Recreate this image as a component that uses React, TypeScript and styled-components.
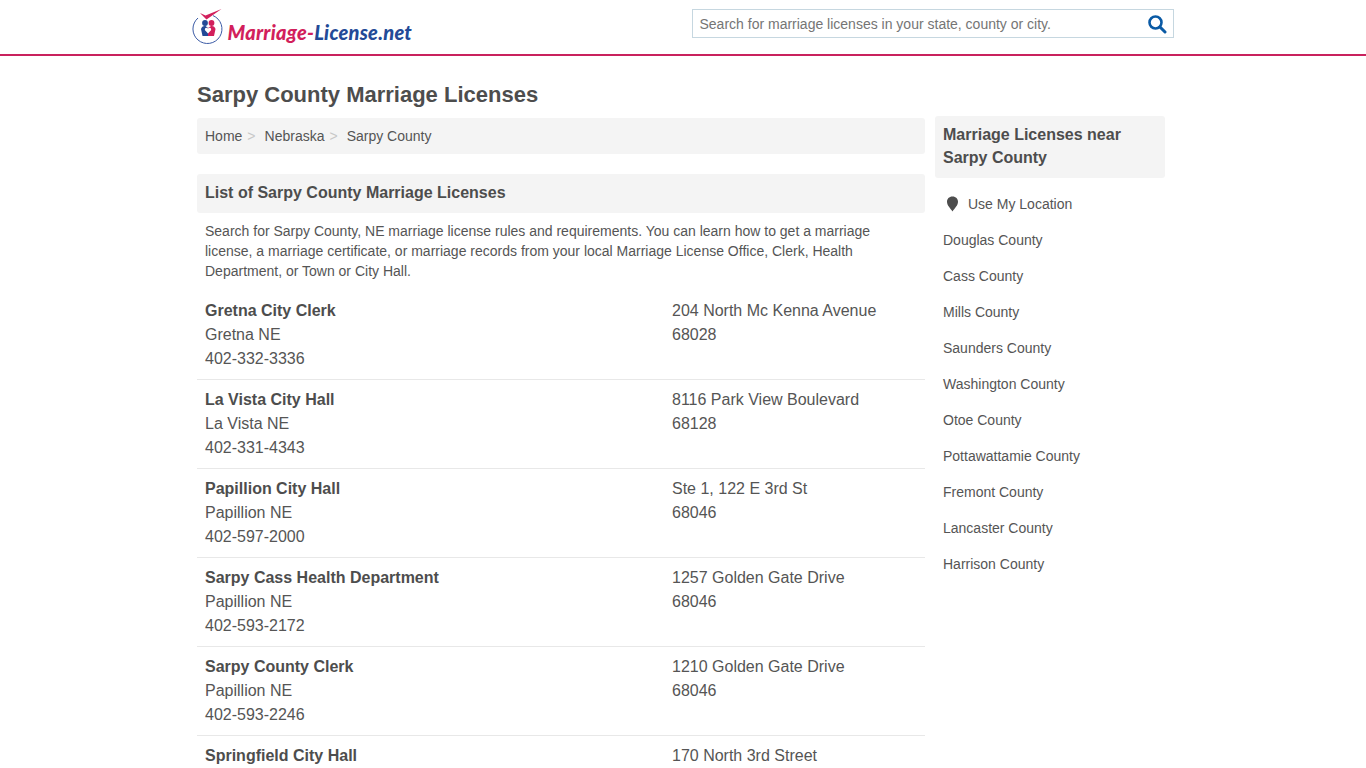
import React from "react";
import styled, { createGlobalStyle } from "styled-components";

const Global = createGlobalStyle`
  html, body { margin: 0; padding: 0; background: #fff; }
  body { font-family: "Liberation Sans", Arial, sans-serif; color: #4d4d4d; font-size: 14px; }
`;
const Header = styled.header`
  height: 54px;
  border-bottom: 2px solid #c9215d;
  display: flex;
  justify-content: center;
`;
const HeaderInner = styled.div`
  width: 982px;
  margin-left: -1px;
  display: flex;
  justify-content: space-between;
  align-items: flex-start;
`;
const Logo = styled.a`
  display: flex;
  align-items: flex-start;
  margin-top: 9px;
  gap: 4px;
  height: 37px;
`;
const LogoText = styled.span`
  font-family: "Lato", sans-serif;
  font-style: italic;
  font-weight: 900;
  font-size: 20px;
  line-height: 24px;
  margin-top: 11px;
  letter-spacing: 0.25px;
  white-space: nowrap;
`;
const LogoPink = styled.span`color: #d21f5c;`;
const LogoBlue = styled.span`color: #234a97;`;
const SearchBox = styled.div`
  box-sizing: border-box;
  width: 482px;
  height: 29px;
  margin-top: 9px;
  border: 1px solid #c6d7e0;
  display: flex;
  align-items: center;
  justify-content: space-between;
  padding: 0 6px 0 7px;
`;
const Placeholder = styled.span`
  font-size: 14px;
  color: #757575;
`;
const Page = styled.div`
  width: 968px;
  margin: 0 auto;
  position: relative;
  left: -2px;
`;
const Title = styled.h1`
  margin: 24px 0 0;
  font-size: 22px;
  line-height: 30px;
  font-weight: 700;
  color: #4d4d4d;
`;
const Columns = styled.div`
  display: flex;
  gap: 10px;
  align-items: flex-start;
`;
const Main = styled.main`
  width: 728px;
  margin-top: 8px;
`;
const Crumbs = styled.nav`
  height: 36px;
  background: #f4f4f4;
  border-radius: 3px;
  display: flex;
  align-items: center;
  padding: 0 8px;
  color: #555;
`;
const Sep = styled.span`
  color: #c8c8c8;
  margin: 0 9px 0 5px;
`;
const SectionHead = styled.h2`
  margin: 20px 0 0;
  height: 39px;
  line-height: 38px;
  background: #f4f4f4;
  border-radius: 3px;
  padding: 0 8px;
  font-size: 16px;
  font-weight: 700;
`;
const Intro = styled.p`
  margin: 8px 0 0;
  padding: 0 8px;
  line-height: 20px;
  width: 690px;
  color: #555;
`;
const Row = styled.div`
  display: flex;
  padding: 8px 8px 7px;
  font-size: 16px;
  line-height: 24px;
  height: 89px;
  box-sizing: border-box;
  border-bottom: 1px solid #e8e8e8;
  color: #555;
  &:last-child { border-bottom: 0; }
`;
const Who = styled.div`width: 467px;`;
const Name = styled.div`font-weight: 700; color: #4d4d4d;`;
const Rows = styled.div`margin-top: 10px;`;
const Side = styled.aside`
  width: 230px;
  margin-top: 6px;
`;
const SideHead = styled.h3`
  margin: 0;
  background: #f4f4f4;
  border-radius: 3px;
  padding: 7px 8px 9px;
  font-size: 16px;
  line-height: 23px;
  font-weight: 700;
`;
const SideList = styled.div`
  margin-top: 8px;
`;
const SideItem = styled.div`
  height: 36px;
  line-height: 36px;
  padding: 0 8px;
  color: #555;
  display: flex;
  align-items: center;
  gap: 9px;
`;
const Pin = styled.svg`
  margin-left: 3px;
  width: 13px;
  height: 16px;
`;

const offices = [
  { name: "Gretna City Clerk", who: ["Gretna NE", "402-332-3336"], where: ["204 North Mc Kenna Avenue", "68028"] },
  { name: "La Vista City Hall", who: ["La Vista NE", "402-331-4343"], where: ["8116 Park View Boulevard", "68128"] },
  { name: "Papillion City Hall", who: ["Papillion NE", "402-597-2000"], where: ["Ste 1, 122 E 3rd St", "68046"] },
  { name: "Sarpy Cass Health Department", who: ["Papillion NE", "402-593-2172"], where: ["1257 Golden Gate Drive", "68046"] },
  { name: "Sarpy County Clerk", who: ["Papillion NE", "402-593-2246"], where: ["1210 Golden Gate Drive", "68046"] },
  { name: "Springfield City Hall", who: [], where: ["170 North 3rd Street"] },
];
const near = ["Douglas County","Cass County","Mills County","Saunders County","Washington County","Otoe County","Pottawattamie County","Fremont County","Lancaster County","Harrison County"];

export default function App() {
  return (
    <>
      <Global />
      <Header>
        <HeaderInner>
          <Logo>
            <svg width="32" height="37" viewBox="0 0 32 37">
              <path d="M21 6.6 A14.5 14.5 0 1 1 6 9" fill="none" stroke="#3a5aa5" strokeWidth="1" />
              <path d="M8 4 L13.5 6.5 L29.5 0 L14.5 10.5 Z" fill="#d21f5c" />
              <circle cx="13" cy="14" r="2.9" fill="#234a97" />
              <circle cx="19.5" cy="14" r="2.9" fill="#d21f5c" />
              <path d="M9 20 Q10 16.5 13.5 17 L16 19 L16 27 L10.5 27 Z" fill="#234a97" />
              <path d="M23.5 20 Q22.5 16.5 19 17 L16 19 L16 27 L22 27 Z" fill="#d21f5c" />
              <path d="M16 24.5 L12.8 21 Q12.6 18.8 14.6 18.8 Q15.6 18.8 16 19.8 Q16.5 18.8 17.5 18.8 Q19.4 18.8 19.2 21 Z" fill="#fff" />
            </svg>
            <LogoText><LogoPink>Marriage-</LogoPink><LogoBlue>License.net</LogoBlue></LogoText>
          </Logo>
          <SearchBox>
            <Placeholder>Search for marriage licenses in your state, county or city.</Placeholder>
            <svg width="20" height="20" viewBox="0 0 20 20">
              <circle cx="8.5" cy="8.5" r="6" fill="none" stroke="#0a5aa5" strokeWidth="2.6" />
              <path d="M13 13 L18 18" stroke="#0a5aa5" strokeWidth="3" strokeLinecap="round" />
            </svg>
          </SearchBox>
        </HeaderInner>
      </Header>
      <Page>
        <Title>Sarpy County Marriage Licenses</Title>
        <Columns>
          <Main>
            <Crumbs>Home<Sep>&gt;</Sep>Nebraska<Sep>&gt;</Sep>Sarpy County</Crumbs>
            <SectionHead>List of Sarpy County Marriage Licenses</SectionHead>
            <Intro>Search for Sarpy County, NE marriage license rules and requirements. You can learn how to get a marriage license, a marriage certificate, or marriage records from your local Marriage License Office, Clerk, Health Department, or Town or City Hall.</Intro>
            <Rows>
              {offices.map((o) => (
                <Row key={o.name}>
                  <Who>
                    <Name>{o.name}</Name>
                    {o.who.map((line) => <div key={line}>{line}</div>)}
                  </Who>
                  <div>
                    {o.where.map((line) => <div key={line}>{line}</div>)}
                  </div>
                </Row>
              ))}
            </Rows>
          </Main>
          <Side>
            <SideHead>Marriage Licenses near Sarpy County</SideHead>
            <SideList>
              <SideItem>
                <Pin viewBox="0 0 13 16">
                  <path d="M6.5 0.5 C3 0.5 1 3 1 5.8 C1 9.5 4.5 12.5 6.5 15.5 C8.5 12.5 12 9.5 12 5.8 C12 3 10 0.5 6.5 0.5 Z" fill="#4d4d4d" />
                </Pin>
                Use My Location
              </SideItem>
              {near.map((n) => <SideItem key={n}>{n}</SideItem>)}
            </SideList>
          </Side>
        </Columns>
      </Page>
    </>
  );
}
